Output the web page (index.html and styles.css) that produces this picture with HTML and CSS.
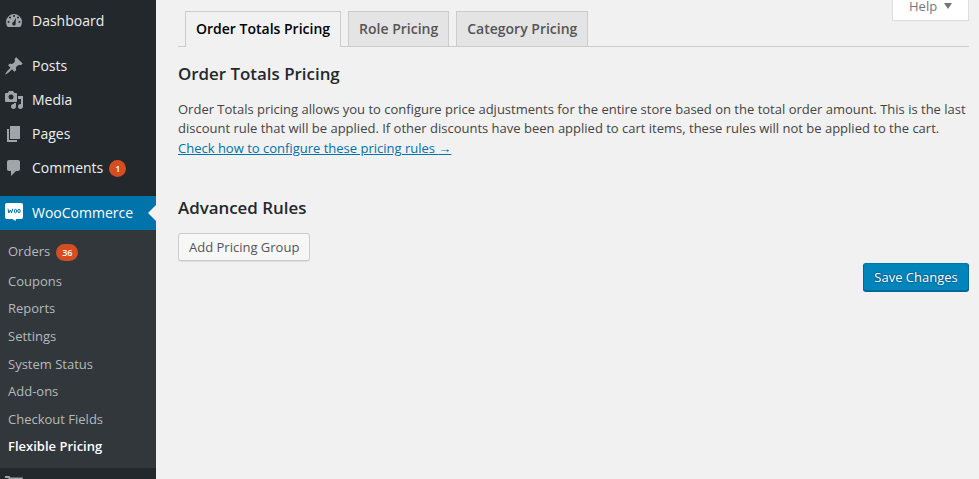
FILE: index.html
```html
<!DOCTYPE html>
<html lang="en">
<head>
<meta charset="utf-8">
<title>Order Totals Pricing</title>
<link rel="stylesheet" href="styles.css">
</head>
<body>
<nav class="sidebar">
  <a class="item"><svg class="icon raised" viewBox="0 0 20 20"><path fill-rule="evenodd" d="M3.76 17h12.480A8 8 0 1 0 3.760 17zM10 5a1 1 0 1 1 0 2 1 1 0 0 1 0-2zM6 6.500a1 1 0 1 1 0 2 1 1 0 0 1 0-2zM14 6.500a1 1 0 1 1 0 2 1 1 0 0 1 0-2zM4.500 11a1 1 0 1 1 0 2 1 1 0 0 1 0-2zM15.500 11a1 1 0 1 1 0 2 1 1 0 0 1 0-2zM12 7.800l-.4 5.500a1.700 1.700 0 1 1-2.100-1.200z"/></svg><span>Dashboard</span></a>
  <a class="item after-gap"><svg class="icon" viewBox="0 0 20 20"><path d="M10.44 3.02l1.82-1.82 6.36 6.35-1.83 1.82c-1.05-.68-2.48-.57-3.41.36l-.75.75c-.92.93-1.04 2.35-.35 3.41l-1.83 1.82-2.41-2.41-2.8 2.79c-.42.42-3.38 2.71-3.8 2.29s1.86-3.39 2.28-3.81l2.79-2.79L4.1 9.36l1.83-1.82c1.05.69 2.48.57 3.4-.36l.75-.75c.93-.92 1.05-2.35.36-3.41z"/></svg><span>Posts</span></a>
  <a class="item"><svg class="icon" viewBox="0 0 20 20"><path fill-rule="evenodd" d="M13 11V4c0-.55-.45-1-1-1h-1.67L9 1H5L3.67 3H2c-.55 0-1 .45-1 1v7c0 .55.45 1 1 1h10c.55 0 1-.45 1-1zM7 4.5a2.5 2.5 0 1 1 0 5 2.5 2.5 0 0 1 0-5zM14 6h5v10.500c0 1.380-1.120 2.500-2.500 2.500S14 17.880 14 16.500s1.120-2.500 2.500-2.500c.17 0 .34.02.5.05V9h-3V6zm-4 8.050V13h2v3.500c0 1.380-1.120 2.500-2.500 2.500S7 17.880 7 16.500 8.120 14 9.500 14c.17 0 .34.02.5.05z"/></svg><span>Media</span></a>
  <a class="item"><svg class="icon" viewBox="0 0 20 20"><path d="M6 15V2h10v13H6zm-1 1h8v2H3V5h2v11z"/></svg><span>Pages</span></a>
  <a class="item"><svg class="icon" viewBox="0 0 20 20"><path d="M5 2h9c1.100 0 2 .9 2 2v7c0 1.100-.9 2-2 2h-2l-5 5v-5H5c-1.100 0-2-.9-2-2V4c0-1.100.9-2 2-2z"/></svg><span>Comments</span><b class="badge">1</b></a>
  <a class="item after-gap current"><svg class="icon" viewBox="0 0 20 20"><path d="M3 0h14q2 0 2 2v12q0 2-2 2h-5l-.5 2-3-2H3q-2 0-2-2V2q0-2 2-2z"/><g fill="none" stroke="#0073aa" stroke-width="1"><path d="M4 5.700l.8 4.300 1.600-3 1.200 3 1-4.300"/><ellipse cx="11.500" cy="8" rx="1.200" ry="1.700"/><ellipse cx="15" cy="8" rx="1.200" ry="1.700"/></g></svg><span>WooCommerce</span></a>
  <div class="submenu">
    <a class="with-badge">Orders<b class="badge">36</b></a>
    <a>Coupons</a>
    <a>Reports</a>
    <a>Settings</a>
    <a>System Status</a>
    <a>Add-ons</a>
    <a>Checkout Fields</a>
    <a class="selected">Flexible Pricing</a>
  </div>
  <a class="item"><svg class="icon" viewBox="0 0 20 20"><path d="M1 1h4.500l.8 1.500H19L17 11H7L4.300 3H1zM7 13h10v2H7z"/></svg></a>
</nav>
<main class="content">
  <header class="top">
    <div class="tabs"><a class="tab active">Order Totals Pricing</a><a class="tab">Role Pricing</a><a class="tab">Category Pricing</a></div>
    <a class="help">Help <i class="arrow"></i></a>
  </header>
  <h3>Order Totals Pricing</h3>
  <p>Order Totals pricing allows you to configure price adjustments for the entire store based on the total order amount. This is the last<br>discount rule that will be applied. If other discounts have been applied to cart items, these rules will not be applied to the cart.<br><a class="link">Check how to configure these pricing rules <span class="next">→</span></a></p>
  <h3 class="rules">Advanced Rules</h3>
  <button class="button">Add Pricing Group</button>
  <div class="actions"><button class="button primary">Save Changes</button></div>
</main>
</body>
</html>
```
FILE: styles.css
```css
* { box-sizing: border-box; }
body {
  margin: 0;
  height: 479px;
  overflow: hidden;
  display: flex;
  background: #f1f1f1;
  color: #444;
  font: 13px/19.5px "Open Sans", sans-serif;
}
.sidebar {
  width: 156px;
  flex: none;
  padding-top: 4px;
  background: #23282d;
}
.item {
  display: flex;
  align-items: center;
  height: 34px;
  padding-left: 4px;
  color: #eee;
  font-size: 14px;
  position: relative;
}
.item span { margin-left: 8px; }
.after-gap { margin-top: 11px; }
.icon { width: 20px; height: 20px; flex: none; fill: #a0a5aa; }
.raised { margin-bottom: 2px; }
.current { background: #0073aa; color: #fff; }
.current .icon { fill: #fff; }
.current::after {
  content: "";
  position: absolute;
  right: 0;
  top: 9px;
  border: 8px solid transparent;
  border-left: 0;
  border-right-color: #f1f1f1;
}
.badge {
  display: inline-block;
  min-width: 17px;
  height: 17px;
  padding: 0 6px;
  margin: 1px 0 0 6px;
  border-radius: 10px;
  background: #d54e21;
  color: #fff;
  font-size: 9px;
  line-height: 17px;
  font-weight: 600;
  text-align: center;
}
.submenu {
  height: 238px;
  padding: 7px 0 8px;
  background: #32373c;
}
.submenu a {
  display: flex;
  align-items: center;
  height: 27.6px;
  padding-left: 8px;
  color: #b4b9be;
}
.submenu .with-badge { height: 30.75px; padding-bottom: 1.5px; }
.submenu .badge { margin-top: 2px; }
.submenu .selected { color: #fff; font-weight: 600; }
.content { flex: 1; padding: 0 10px 0 22px; }
.top {
  display: flex;
  justify-content: space-between;
  align-items: flex-start;
  height: 47px;
  border-bottom: 1px solid #ccc;
}
.tabs { display: flex; gap: 7px; padding: 11px 0 0 7px; }
.tab {
  height: 35px;
  padding: 5px 10px;
  border: 1px solid #ccc;
  border-bottom: 0;
  background: #e4e4e4;
  color: #555;
  font-size: 14px;
  font-weight: 600;
  line-height: 24px;
  white-space: nowrap;
}
.active { height: 36px; background: #f1f1f1; color: #000; }
.help {
  display: flex;
  justify-content: space-between;
  width: 77px;
  height: 21px;
  padding: 0 16px;
  border: 1px solid #ddd;
  border-top: 0;
  background: #fff;
  box-shadow: 0 1px 1px -1px rgba(0,0,0,.1);
  color: #72777c;
  line-height: 13px;
}
.arrow {
  margin-top: 3px;
  width: 0;
  height: 6px;
  border: 4.5px solid transparent;
  border-top: 6px solid #72777c;
  border-bottom: 0;
}
h3 {
  margin: 17px 0 16px;
  color: #23282d;
  font-size: 16.9px;
  font-weight: 600;
  line-height: 20px;
}
p { margin: 0; white-space: nowrap; line-height: 19.3px; }
.link { color: #0073aa; text-decoration: underline; }
.next { font-family: "Liberation Sans", sans-serif; line-height: 1; }
.rules { margin: 40px 0 15px; }
.button {
  display: block;
  height: 28px;
  padding: 0 10px;
  border: 1px solid #ccc;
  border-radius: 3px;
  background: #f7f7f7;
  box-shadow: 0 1px 0 #ddd;
  color: #555;
  font: 13px/26px "Open Sans", sans-serif;
}
.actions { display: flex; justify-content: flex-end; margin-top: 2px; }
.primary {
  width: 106px;
  background: #0085ba;
  border-color: #0073aa #006799 #006799;
  box-shadow: 0 1px 0 #006799;
  color: #fff;
  text-shadow: 0 -1px 1px #006799, 1px 0 1px #006799, 0 1px 1px #006799, -1px 0 1px #006799;
}
```
